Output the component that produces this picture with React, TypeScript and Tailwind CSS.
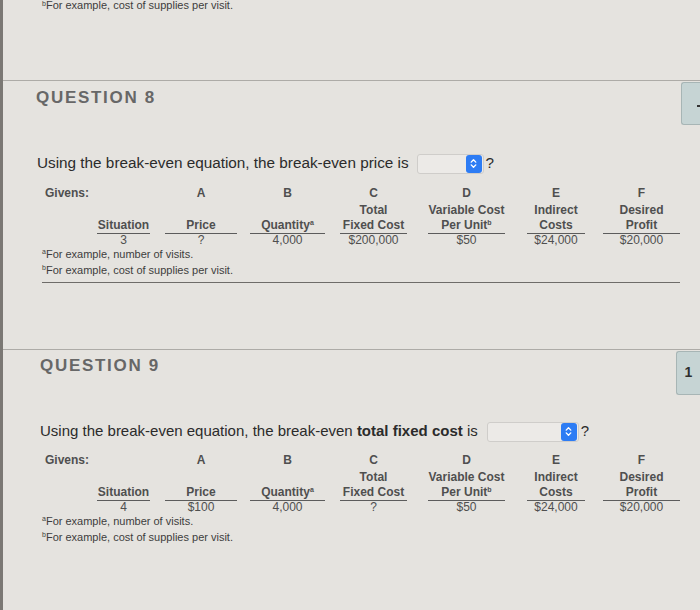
import { ChevronsUpDown } from "lucide-react";

type Column = {
  letter?: string;
  l1?: string;
  l2: string;
  sup?: string;
  value: string;
  cls: string;
};

const q8Cols: Column[] = [
  { l2: "Situation", value: "3", cls: "w-[53px] ml-0" },
  { letter: "A", l2: "Price", value: "?", cls: "w-[72px] ml-[15px]" },
  { letter: "B", l2: "Quantity", sup: "a", value: "4,000", cls: "w-[75px] ml-[13px]" },
  { letter: "C", l1: "Total", l2: "Fixed Cost", value: "$200,000", cls: "w-[67px] ml-[15px]" },
  { letter: "D", l1: "Variable Cost", l2: "Per Unit", sup: "b", value: "$50", cls: "w-[77px] ml-[21px]" },
  { letter: "E", l1: "Indirect", l2: "Costs", value: "$24,000", cls: "w-[58px] ml-[22px]" },
  { letter: "F", l1: "Desired", l2: "Profit", value: "$20,000", cls: "w-[77px] ml-[18px]" },
];

const q9Cols: Column[] = q8Cols.map((c, i) =>
  i === 0 ? { ...c, value: "4" } : i === 1 ? { ...c, value: "$100" } : i === 3 ? { ...c, value: "?" } : c
);

function Givens({ cols }: { cols: Column[] }) {
  return (
    <div className="flex pl-[42px] text-[12px] text-[#4f4f4f]">
      <div className="w-[52px] font-bold leading-[15px]">Givens:</div>
      {cols.map((c) => (
        <div key={c.l2} className={`flex flex-col items-center ${c.cls}`}>
          <div className="h-[18px] font-bold leading-[15px]">{c.letter}</div>
          <div className="flex h-[30px] w-full flex-col items-center justify-end border-b border-[#5c5c5c] font-bold leading-[15px]">
            {c.l1 && <div>{c.l1}</div>}
            <div>
              {c.l2}
              {c.sup && <sup className="text-[7px]">{c.sup}</sup>}
            </div>
          </div>
          <div className="leading-[12px]">{c.value}</div>
        </div>
      ))}
    </div>
  );
}

function Notes() {
  return (
    <div className="pl-[39px] text-[11px] leading-[16px] text-[#3d3d3d]">
      <div>
        <sup className="text-[7px]">a</sup>For example, number of visits.
      </div>
      <div>
        <sup className="text-[7px]">b</sup>For example, cost of supplies per visit.
      </div>
    </div>
  );
}

function Select({ w }: { w: string }) {
  return (
    <span className={`mr-[2px] inline-flex h-[20px] items-center justify-end rounded-[3px] border border-[#cfcdca] bg-[#eceae7] pr-px align-middle ${w}`}>
      <span className="flex h-[18px] w-[16px] items-center justify-center rounded-[3px] bg-[#2d7cf4] text-white">
        <ChevronsUpDown size={11} strokeWidth={3} />
      </span>
    </span>
  );
}

export default function App() {
  return (
    <div className="min-h-[610px] border-l-[3px] border-[#7b7874] bg-[#e5e3df] font-['Liberation_Sans',Arial,sans-serif]">
      <div className="flow-root h-[80px]">
        <div className="-mt-[3px] pl-[39px] text-[11px] leading-[16px] text-[#3d3d3d]">
          <sup className="text-[7px]">b</sup>For example, cost of supplies per visit.
        </div>
      </div>

      {/* question 8 */}
      <div className="border-t border-[#adaba7]">
        <div className="flex items-start justify-between">
          <div className="pl-[33px] pt-[7px] text-[17px] font-bold leading-[20px] tracking-[1.7px] text-[#676767]">
            QUESTION 8
          </div>
          <div className="mt-px flex h-[43px] w-[19px] items-center justify-end rounded-l-[3px] border border-r-0 border-[#a7b5b5] bg-[#c6d4d4] pt-[4px]">
            <div className="h-[2px] w-[3px] bg-[#333]" />
          </div>
        </div>
        <div className="mt-[28px] pl-[34px] text-[15.3px] leading-[20px] text-[#2b2b2b]">
          Using the break-even equation, the break-even price is
          <Select w="w-[67px] ml-[8px]" />?
        </div>
        <div className="mt-[12px]">
          <Givens cols={q8Cols} />
        </div>
        <Notes />
        <div className="ml-[39px] mr-[20px] mt-[4px] border-t border-[#6e6c69]" />
      </div>

      <div className="h-[66px]" />

      {/* question 9 */}
      <div className="border-t border-[#adaba7]">
        <div className="flex items-start justify-between">
          <div className="pl-[37px] pt-[6px] text-[17px] font-bold leading-[20px] tracking-[1.7px] text-[#676767]">
            QUESTION 9
          </div>
          <div className="mt-px flex h-[44px] w-[24px] items-center justify-center rounded-l-[3px] border border-r-0 border-[#a7b5b5] bg-[#c6d4d4] text-[14px] font-bold text-[#2f2f2f]">
            1
          </div>
        </div>
        <div className="mt-[26px] pl-[37px] text-[15px] leading-[20px] text-[#2b2b2b]">
          Using the break-even equation, the break-even <b>total fixed cost</b> is
          <Select w="w-[92px] ml-[9px]" />?
        </div>
        <div className="mt-[11px]">
          <Givens cols={q9Cols} />
        </div>
        <Notes />
      </div>
    </div>
  );
}
